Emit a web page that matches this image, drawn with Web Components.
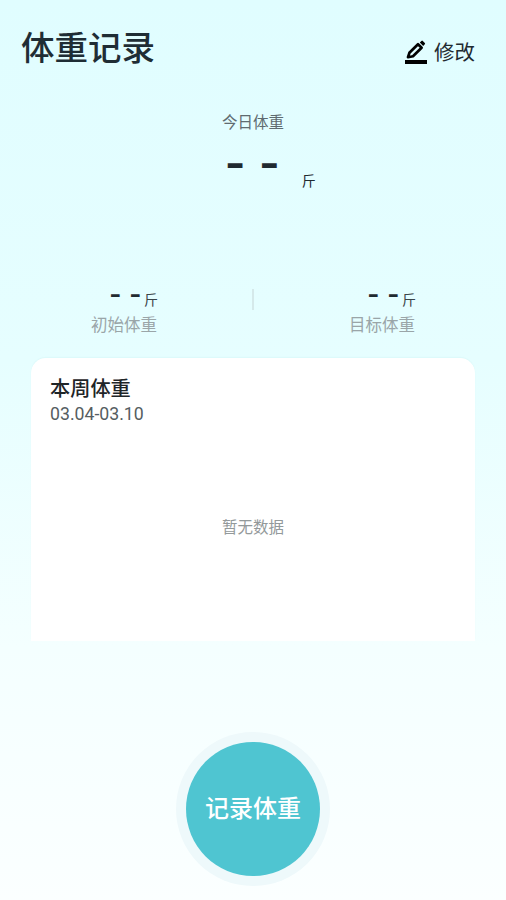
<!DOCTYPE html>
<html lang="zh"><head><meta charset="utf-8">
<style>
html,body{margin:0;padding:0}
body{width:506px;height:900px;overflow:hidden;background:linear-gradient(180deg,#e0fdff 0%,#e6feff 40%,#f4ffff 72%,#fbffff 100%);font-family:"Noto Sans CJK SC","Noto Sans",sans-serif;color:#1f2a30}
</style></head><body>
<template id="t-header"><style>
:host{display:flex;justify-content:space-between;align-items:flex-start;padding:22px 31px 0 21px;height:78px;box-sizing:content-box}
h1{margin:0;font-size:33.5px;line-height:48px;font-weight:500;color:#1f2d35}
.edit{display:flex;align-items:center;gap:7px;margin-top:5px;font-size:20.5px;line-height:48px;color:#1f2a30}
svg{display:block;width:22px;height:24px;margin-top:2px}
</style><h1><slot name="title"></slot></h1><div class="edit"><svg viewBox="0 0 22 24"><path d="M0 20h22v4.4H0z" fill="#000"/><path d="M3 17.2 4.4 12.8 13 4.2 16.6 7.8 8 16.2Z" fill="none" stroke="#000" stroke-width="2.7" stroke-linejoin="round"/><path d="M14.8 2.6 16.4.9a1 1 0 0 1 1.4 0L19.8 2.9a1 1 0 0 1 0 1.4L18.2 6Z" fill="#000"/></svg><slot name="action"></slot></div></template>

<template id="t-today"><style>
:host{display:flex;flex-direction:column;align-items:center;height:188px}
.l{font-size:15.5px;line-height:22px;color:#5f6b70;margin-top:10px}
.row{display:flex;align-items:flex-start;margin-top:10px;margin-left:40px}
.v{font:700 43px/44px Roboto,sans-serif;color:#1f2a30;white-space:pre;transform:scaleX(1.24)}
.u{font-size:14px;line-height:20px;margin:28px 0 0 27px;color:#1f2a30}
</style><div class="l"><slot name="label"></slot></div><div class="row"><div class="v"><slot name="value"></slot></div><div class="u"><slot name="unit"></slot></div></div></template>

<template id="t-stats"><style>
:host{display:grid;grid-template-columns:1fr 2px 1fr;height:70px;align-items:start}
.d{width:2px;height:21px;margin-top:1px;background:#d5e9ea}
::slotted([slot="a"]){--pr:95px;--rs:-1px;--ls:0px}
::slotted([slot="b"]){--pr:90px;--rs:0px;--ls:1px}
</style><slot name="a"></slot><div class="d"></div><slot name="b"></slot></template>

<template id="t-stat"><style>
:host{display:flex;flex-direction:column;align-items:flex-end;padding-right:var(--pr,95px)}
.r{display:flex;align-items:flex-start;height:28px;margin-right:var(--rs,0)}
.v{font:700 24px/24px Roboto,sans-serif;color:#1f2a30;white-space:pre;margin-top:-5px;transform:scaleX(1.3)}
.u{font-size:14px;line-height:20px;margin:1px 0 0 6px;color:#3a4448}
.l{font-size:16.5px;line-height:22px;color:#9aa5a8;margin-top:-3px;margin-right:var(--ls,0)}
</style><div class="r"><div class="v"><slot name="value"></slot></div><div class="u"><slot name="unit"></slot></div></div><div class="l"><slot name="label"></slot></div></template>

<template id="t-card"><style>
:host{display:block;margin:0 31px;height:283px;background:#fff;border-radius:15px 15px 0 0;box-sizing:border-box;padding:16px 19px 0;box-shadow:0 -1px 1px rgba(150,210,215,.12)}
.t{font-size:20.2px;line-height:27px;font-weight:500;color:#1f2528}
.s{font:400 17.7px/24px Roboto,sans-serif;color:#555d61;margin-top:1px}
.e{font-size:15.5px;line-height:22px;color:#93999a;text-align:center;margin-top:89px}
</style><div class="t"><slot name="title"></slot></div><div class="s"><slot name="sub"></slot></div><div class="e"><slot name="empty"></slot></div></template>

<template id="t-btn"><style>
:host{display:flex;justify-content:center;margin-top:91px}
.h{width:154px;height:154px;border-radius:50%;background:#eef9fb;display:flex;align-items:center;justify-content:center}
.c{width:134px;height:134px;box-sizing:border-box;padding-bottom:5px;border-radius:50%;background:#4fc5d1;color:#fff;font-size:24px;font-weight:500;display:flex;align-items:center;justify-content:center}
</style><div class="h"><div class="c"><slot></slot></div></div></template>

<w-header><span slot="title">体重记录</span><span slot="action">修改</span></w-header>
<w-today><span slot="label">今日体重</span><span slot="value">- -</span><span slot="unit">斤</span></w-today>
<w-stats>
<w-stat slot="a"><span slot="value">- -</span><span slot="unit">斤</span><span slot="label">初始体重</span></w-stat>
<w-stat slot="b"><span slot="value">- -</span><span slot="unit">斤</span><span slot="label">目标体重</span></w-stat>
</w-stats>
<w-card><span slot="title">本周体重</span><span slot="sub">03.04-03.10</span><span slot="empty">暂无数据</span></w-card>
<w-btn>记录体重</w-btn>
<script>
for (const [tag,id] of [['w-header','t-header'],['w-today','t-today'],['w-stats','t-stats'],['w-stat','t-stat'],['w-card','t-card'],['w-btn','t-btn']]) {
  customElements.define(tag, class extends HTMLElement {
    constructor(){super();this.attachShadow({mode:'open'}).appendChild(document.getElementById(id).content.cloneNode(true));}
  });
}
</script>
</body></html>
